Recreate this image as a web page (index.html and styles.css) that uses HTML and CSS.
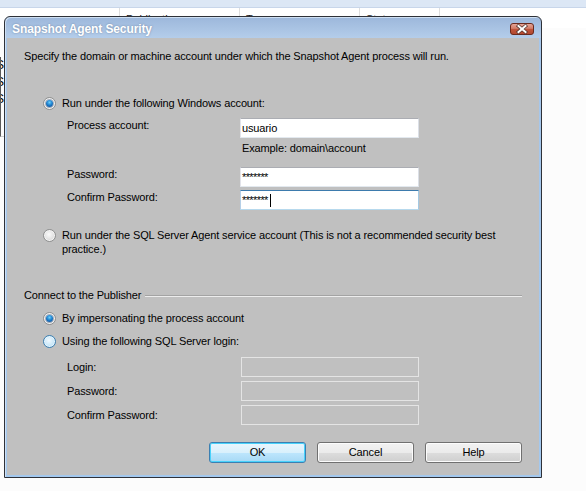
FILE: index.html
```html
<!DOCTYPE html>
<html>
<head>
<meta charset="utf-8">
<title>Snapshot Agent Security</title>
<link rel="stylesheet" href="styles.css">
</head>
<body>
<div class="app">
  <div class="toolbar"></div>
  <div class="header-row">
    <div class="hcell c1"></div>
    <div class="hcell">Publication</div>
    <div class="hcell">Type</div>
    <div class="hcell">Status</div>
    <div class="hcell"></div>
  </div>
  <div class="list">
    <div class="list-row">S</div>
    <div class="list-row">S</div>
    <div class="list-row">S</div>
  </div>
</div>

<div class="dialog">
  <div class="titlebar">
    <span class="title">Snapshot Agent Security</span>
    <span class="close">
      <svg width="24" height="12" viewBox="0 0 24 12">
        <defs>
          <linearGradient id="cg" x1="0" y1="0" x2="0" y2="1">
            <stop offset="0" stop-color="#e8aa9c"/>
            <stop offset="0.45" stop-color="#d27c68"/>
            <stop offset="0.5" stop-color="#c0553c"/>
            <stop offset="1" stop-color="#b2472f"/>
          </linearGradient>
        </defs>
        <rect x="0.5" y="0.5" width="23" height="11" rx="2.5" fill="url(#cg)" stroke="#6b2a1e"/>
        <path d="M8.5 3 L15.5 9 M15.5 3 L8.5 9" stroke="#5a3a34" stroke-width="3.6" stroke-linecap="square"/>
        <path d="M8.5 3 L15.5 9 M15.5 3 L8.5 9" stroke="#ffffff" stroke-width="2" stroke-linecap="square"/>
      </svg>
    </span>
  </div>
  <div class="body">
    <p class="desc">Specify the domain or machine account under which the Snapshot Agent process will run.</p>

    <div class="radio-row r1">
      <span class="radio checked"><span class="dot"></span></span>
      <span class="radio-label">Run under the following Windows account:</span>
    </div>

    <div class="account-grid">
      <span class="lbl">Process account:</span>
      <div class="tb">usuario</div>
      <span></span>
      <span class="example">Example: domain\account</span>
      <span class="lbl">Password:</span>
      <div class="tb pw">*******</div>
      <span class="lbl">Confirm Password:</span>
      <div class="tb pw focus">*******<span class="caret"></span></div>
    </div>

    <div class="radio-row r2">
      <span class="radio"></span>
      <span class="radio-label two-line">Run under the SQL Server Agent service account (This is not a recommended security best<br>practice.)</span>
    </div>

    <div class="group-head">
      <span>Connect to the Publisher</span>
      <span class="rule"></span>
    </div>

    <div class="radio-row r3">
      <span class="radio checked"><span class="dot"></span></span>
      <span class="radio-label">By impersonating the process account</span>
    </div>

    <div class="radio-row r4">
      <span class="radio hover"></span>
      <span class="radio-label">Using the following SQL Server login:</span>
    </div>

    <div class="login-grid">
      <span class="lbl">Login:</span>
      <div class="tb disabled"></div>
      <span class="lbl">Password:</span>
      <div class="tb disabled"></div>
      <span class="lbl">Confirm Password:</span>
      <div class="tb disabled"></div>
    </div>

    <div class="buttons">
      <button class="btn default">OK</button>
      <button class="btn">Cancel</button>
      <button class="btn">Help</button>
    </div>
  </div>
</div>
</body>
</html>
```

FILE: styles.css
```css
* { box-sizing: border-box; }

html, body {
  margin: 0;
  padding: 0;
}

body {
  width: 586px;
  height: 491px;
  overflow: hidden;
  background: #fcfcfc;
  font-family: "Liberation Sans", Arial, sans-serif;
  font-size: 11px;
  color: #000;
  position: relative;
}

/* ---------- background application ---------- */
.app {
  width: 586px;
  height: 491px;
}

.toolbar {
  height: 8px;
  background: #dce7f5;
  border-bottom: 1px solid #c8d6ea;
}

.header-row {
  display: grid;
  grid-template-columns: 119px 120px 120px 80px 1fr;
  height: 20px;
  background: #ffffff;
}

.hcell {
  border-left: 1px solid #dedede;
  padding: 5px 0 0 6px;
  color: #222;
  white-space: nowrap;
  overflow: hidden;
}

.hcell.c1 { border-left: none; }

.list {
  margin-top: 29px;
  width: 6px;
  border-left: 1px solid #5a5a5a;
  border-bottom: 1px solid #d0d0d0;
  padding-bottom: 28px;
  overflow: hidden;
}

.list-row {
  height: 17px;
  line-height: 17px;
  font-size: 12px;
  margin-left: -5px;
  color: #000;
}

/* ---------- dialog window ---------- */
.dialog {
  position: absolute;
  left: 4px;
  top: 16px;
  width: 538px;
  height: 462px;
  border: 1px solid #2e3138;
  border-radius: 6px 6px 0 0;
  padding: 0 2px 2px 2px;
  background: linear-gradient(#9cb7db 0, #b4cdea 21px, #a6c6ea 21px, #a3c8ee 100%);
  box-shadow: inset 1px 1px 0 #cfe0f3;
  display: flex;
  flex-direction: column;
  letter-spacing: -0.13px;
}

.titlebar {
  height: 21px;
  display: flex;
  align-items: center;
  justify-content: space-between;
  padding: 0 5px 0 5px;
}

.title {
  color: #ffffff;
  font-weight: bold;
  font-size: 12px;
  letter-spacing: -0.1px;
  text-shadow: 0 0 2px rgba(60, 80, 110, 0.55);
  margin-top: 2px;
}

.close {
  display: flex;
  margin-top: 2px;
}

.body {
  flex: 1;
  background: #c0c0c0;
  padding: 12px 17px 0 17px;
  display: flex;
  flex-direction: column;
  line-height: 13px;
}

.desc {
  margin: 0;
  height: 13px;
  white-space: nowrap;
}

/* radios */
.radio-row {
  display: flex;
  align-items: flex-start;
  margin-left: 19px;
  gap: 6px;
}

.r1 { margin-top: 34px; }
.r2 { margin-top: 18px; }
.r3 { margin-top: 10px; }
.r4 { margin-top: 10px; }

.radio {
  flex: none;
  width: 13px;
  height: 13px;
  border-radius: 50%;
  border: 1px solid #8f9090;
  background: radial-gradient(circle at 45% 40%, #fbfbfb 0, #e6e6e6 45%, #c9c9c9 100%);
  box-shadow: inset 0 0 0 1px #f3f3f3;
  display: flex;
  align-items: center;
  justify-content: center;
}

.radio.hover {
  border-color: #3c7fb1;
  background: radial-gradient(circle at 45% 40%, #f1f9fe 0, #cde9f9 50%, #9ed2f3 100%);
  box-shadow: inset 0 0 0 1px #e4f4fd;
}

.radio .dot {
  width: 7px;
  height: 7px;
  border-radius: 50%;
  background: radial-gradient(circle at 50% 35%, #6ad0fb 0, #1f82cf 45%, #0b3f86 100%);
  box-shadow: 0 0 0 1px rgba(40, 70, 110, 0.35);
}

.radio-label {
  white-space: nowrap;
}

.radio-label.two-line {
  line-height: 14px;
}

.r2 .radio { margin-top: 1px; }

/* grids */
.account-grid {
  display: grid;
  grid-template-columns: 173px 179px;
  grid-template-rows: 20px 29px 23px 20px;
  margin: 8px 0 0 43px;
  align-items: start;
}

.account-grid .lbl {
  padding-top: 1px;
}

.example {
  padding: 4px 0 0 2px;
  white-space: nowrap;
}

.login-grid {
  display: grid;
  grid-template-columns: 174px 178px;
  grid-auto-rows: 20px;
  row-gap: 4px;
  margin: 9px 0 0 43px;
  align-items: center;
}

.tb {
  height: 20px;
  background: #ffffff;
  border: 1px solid;
  border-color: #abadb3 #dbdfe6 #e3e9ef #e2e3ea;
  padding: 0 1px;
  line-height: 18px;
  white-space: nowrap;
  display: flex;
  align-items: flex-start;
}

.tb.pw {
  line-height: 14px;
  font-size: 11px;
  letter-spacing: -0.6px;
  padding-top: 2px;
}

.tb.focus {
  border-color: #3d7bad #a4c9e3 #b7d9ed #b5cfe7;
}

.caret {
  width: 1px;
  height: 13px;
  background: #000;
  margin: 1px 0 0 2px;
}

.tb.disabled {
  background: #c0c0c0;
  border-color: #e4e4e4;
}

/* group heading */
.group-head {
  display: flex;
  align-items: center;
  margin-top: 33px;
  height: 13px;
  gap: 4px;
}

.group-head span:first-child {
  white-space: nowrap;
}

.rule {
  flex: 1;
  height: 2px;
  border-top: 1px solid #a3a3a3;
  border-bottom: 1px solid #ececec;
}

/* buttons */
.buttons {
  display: flex;
  justify-content: flex-end;
  gap: 11px;
  margin-top: 17px;
}

.btn {
  width: 97px;
  height: 21px;
  font-family: "Liberation Sans", Arial, sans-serif;
  font-size: 11px;
  letter-spacing: -0.13px;
  color: #000;
  border: 1px solid #707070;
  border-radius: 3px;
  background: linear-gradient(#f2f2f2 0, #ebebeb 50%, #dddddd 50%, #cfcfcf 100%);
  box-shadow: inset 0 0 0 1px #fcfcfc;
  padding: 0;
  line-height: 19px;
}

.btn.default {
  border-color: #3c7fb1;
  box-shadow: inset 0 0 0 1px #48d2fb;
  background: linear-gradient(#eaf6fd 0, #d9f0fc 50%, #bee6fd 50%, #a7d9f5 100%);
}
```
